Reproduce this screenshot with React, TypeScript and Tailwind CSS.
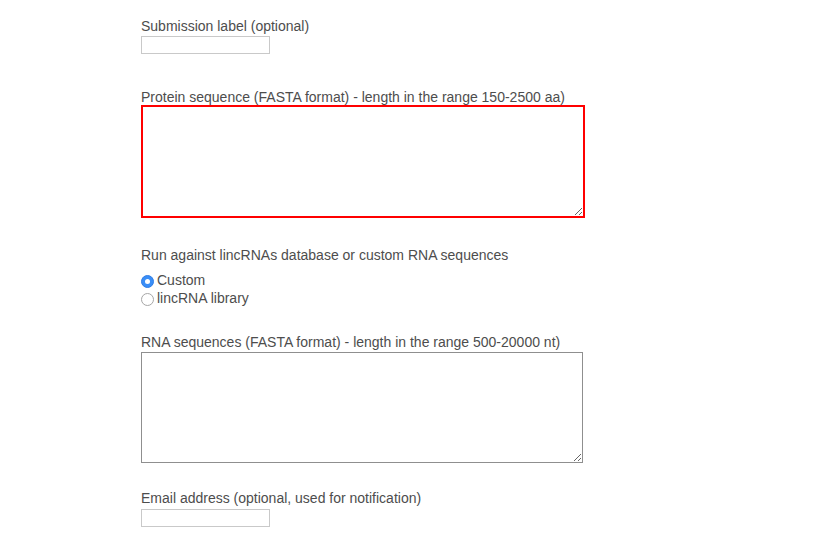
import { useState } from 'react'

function Radio({ checked, label, onClick }: { checked: boolean; label: string; onClick: () => void }) {
  return (
    <label className="flex items-center h-[18px] cursor-default" onClick={onClick}>
      {checked ? (
        <span className="w-[13px] h-[13px] rounded-full bg-[#3a8ef7] border border-[#2f7de6] flex items-center justify-center mt-[2px]">
          <span className="w-[5px] h-[5px] rounded-full bg-white" />
        </span>
      ) : (
        <span className="w-[13px] h-[13px] rounded-full bg-white border border-[#a6a6a6] mt-[2px]" />
      )}
      <span className="ml-[3px]">{label}</span>
    </label>
  )
}

export default function App() {
  const [mode, setMode] = useState<'custom' | 'library'>('custom')

  return (
    <div
      className="min-h-screen bg-white text-[14px] leading-[18px] text-[#4d4d4d] pl-[141px] pt-[17px]"
      style={{ fontFamily: '"Liberation Sans", Arial, Helvetica, sans-serif' }}
    >
      <form className="flex flex-col items-start">
        {/* Submission label */}
        <div>Submission label (optional)</div>
        <input type="text" className="mt-[1px] w-[129px] h-[18px] border border-[#c9c9c9] outline-none px-1 text-[13px]" />

        {/* Protein */}
        <div className="mt-[34px]">Protein sequence (FASTA format) - length in the range 150-2500 aa)</div>
        <textarea className="mt-[-1px] w-[444px] h-[113px] border-2 border-[#ff0000] outline-none p-[2px] text-[13px] resize" />

        {/* Mode */}
        <div className="mt-[28px]">Run against lincRNAs database or custom RNA sequences</div>
        <div className="mt-[7px] flex flex-col">
          <Radio checked={mode === 'custom'} label="Custom" onClick={() => setMode('custom')} />
          <Radio checked={mode === 'library'} label="lincRNA library" onClick={() => setMode('library')} />
        </div>

        {/* RNA */}
        <div className="mt-[26px]">RNA sequences (FASTA format) - length in the range 500-20000 nt)</div>
        <textarea className="mt-[1px] w-[442px] h-[111px] border border-[#8f8f8f] outline-none p-[2px] text-[13px] resize" />

        {/* Email */}
        <div className="mt-[26px]">Email address (optional, used for notification)</div>
        <input type="text" className="mt-[2px] w-[129px] h-[18px] border border-[#c9c9c9] outline-none px-1 text-[13px]" />
      </form>
    </div>
  )
}
